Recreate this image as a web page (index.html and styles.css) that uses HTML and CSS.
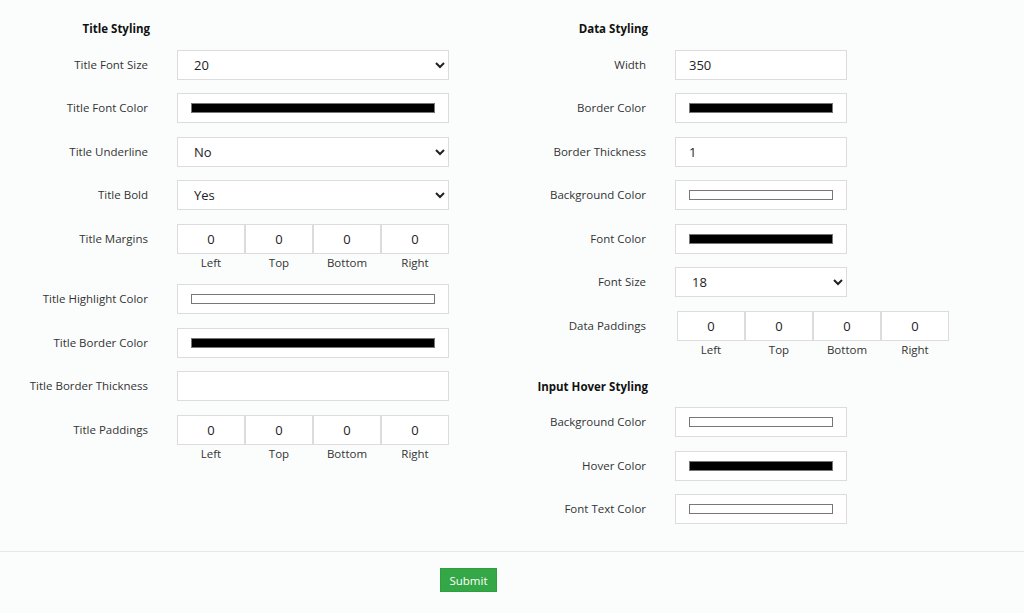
FILE: index.html
```html
<!DOCTYPE html>
<html lang="en">
<head>
  <meta charset="UTF-8">
  <title>Table Styling</title>
  <link rel="stylesheet" href="styles.css">
</head>
<body>
  <form class="settings">
    <div class="columns">

      <section class="panel panel-title-styling">
        <h4 class="panel-heading">Title Styling</h4>

        <label class="field-label">Title Font Size</label>
        <select class="field-control">
          <option>16</option>
          <option selected>20</option>
          <option>24</option>
        </select>

        <label class="field-label">Title Font Color</label>
        <input class="field-control color-input" type="color" value="#000000">

        <label class="field-label">Title Underline</label>
        <select class="field-control">
          <option selected>No</option>
          <option>Yes</option>
        </select>

        <label class="field-label">Title Bold</label>
        <select class="field-control">
          <option>No</option>
          <option selected>Yes</option>
        </select>

        <label class="field-label top">Title Margins</label>
        <div class="box-group">
          <div class="box-cell"><input class="box-input" value="0"><span>Left</span></div>
          <div class="box-cell"><input class="box-input" value="0"><span>Top</span></div>
          <div class="box-cell"><input class="box-input" value="0"><span>Bottom</span></div>
          <div class="box-cell"><input class="box-input" value="0"><span>Right</span></div>
        </div>

        <label class="field-label">Title Highlight Color</label>
        <input class="field-control color-input" type="color" value="#ffffff">

        <label class="field-label">Title Border Color</label>
        <input class="field-control color-input" type="color" value="#000000">

        <label class="field-label">Title Border Thickness</label>
        <input class="field-control" type="text" value="">

        <label class="field-label top">Title Paddings</label>
        <div class="box-group">
          <div class="box-cell"><input class="box-input" value="0"><span>Left</span></div>
          <div class="box-cell"><input class="box-input" value="0"><span>Top</span></div>
          <div class="box-cell"><input class="box-input" value="0"><span>Bottom</span></div>
          <div class="box-cell"><input class="box-input" value="0"><span>Right</span></div>
        </div>
      </section>

      <section class="panel panel-data-styling">
        <h4 class="panel-heading">Data Styling</h4>

        <label class="field-label">Width</label>
        <input class="field-control" type="text" value="350">

        <label class="field-label">Border Color</label>
        <input class="field-control color-input" type="color" value="#000000">

        <label class="field-label">Border Thickness</label>
        <input class="field-control" type="text" value="1">

        <label class="field-label">Background Color</label>
        <input class="field-control color-input" type="color" value="#ffffff">

        <label class="field-label">Font Color</label>
        <input class="field-control color-input" type="color" value="#000000">

        <label class="field-label">Font Size</label>
        <select class="field-control">
          <option>14</option>
          <option>16</option>
          <option selected>18</option>
        </select>

        <label class="field-label top">Data Paddings</label>
        <div class="box-group shifted">
          <div class="box-cell"><input class="box-input" value="0"><span>Left</span></div>
          <div class="box-cell"><input class="box-input" value="0"><span>Top</span></div>
          <div class="box-cell"><input class="box-input" value="0"><span>Bottom</span></div>
          <div class="box-cell"><input class="box-input" value="0"><span>Right</span></div>
        </div>

        <h4 class="panel-heading spaced">Input Hover Styling</h4>

        <label class="field-label">Background Color</label>
        <input class="field-control color-input" type="color" value="#ffffff">

        <label class="field-label">Hover Color</label>
        <input class="field-control color-input" type="color" value="#000000">

        <label class="field-label">Font Text Color</label>
        <input class="field-control color-input" type="color" value="#ffffff">
      </section>

    </div>

    <div class="actions">
      <button type="button" class="submit-btn">Submit</button>
    </div>
  </form>
</body>
</html>
```

FILE: styles.css
```css
body {
  margin: 0;
  background: #fbfdfd;
  font-family: "Open Sans", "Liberation Sans", sans-serif;
  font-size: 11.5px;
  color: #333;
}
.settings {
  padding-top: 19px;
}
.columns {
  display: flex;
  align-items: flex-start;
  gap: 49px;
}
.panel {
  display: grid;
  grid-template-columns: 148px 272px;
  column-gap: 29px;
  row-gap: 13.5px;
  align-items: center;
}
.panel-data-styling {
  grid-template-columns: 148px 172px;
}
.panel-heading {
  grid-column: 1;
  margin: 1px -2px -1px 0;
  text-align: right;
  font-size: 11.5px;
  line-height: 17px;
  font-weight: 700;
  color: #111;
}
.panel-heading.spaced {
  margin-top: 6.5px;
}
.field-label {
  grid-column: 1;
  text-align: right;
  line-height: 30px;
  white-space: nowrap;
}
.field-label.top {
  align-self: start;
}
.field-control {
  grid-column: 2;
  box-sizing: border-box;
  width: 100%;
  height: 30px;
  margin: 0;
  padding: 0 13px;
  border: 1px solid #dcdcdc;
  border-radius: 0;
  background: #fff;
  font-family: inherit;
  font-size: 13px;
  color: #222;
  outline: none;
}
select.field-control {
  padding-left: 12px;
}
.color-input {
  -webkit-appearance: none;
  appearance: none;
  padding: 9px 13px;
  cursor: pointer;
}
.color-input::-webkit-color-swatch-wrapper {
  padding: 0;
}
.color-input::-webkit-color-swatch {
  border: 1px solid #777;
  border-radius: 0;
}
.box-group {
  grid-column: 2;
  display: grid;
  grid-template-columns: repeat(4, 68px);
  width: 272px;
}
.box-group.shifted {
  margin-left: 2px;
}
.box-cell {
  display: flex;
  flex-direction: column;
  align-items: center;
}
.box-input {
  box-sizing: border-box;
  width: 100%;
  height: 30px;
  margin: 0;
  padding: 0;
  border: 1px solid #dcdcdc;
  background: #fff;
  text-align: center;
  font-family: inherit;
  font-size: 13px;
  color: #222;
  outline: none;
}
.box-cell span {
  line-height: 17px;
  font-size: 11.5px;
}
.actions {
  margin-top: 27px;
  border-top: 1px solid #e6e8e8;
  padding: 16px 0 20px 440px;
}
.submit-btn {
  width: 57px;
  height: 24px;
  padding: 0;
  border: 1px solid #2f9e3f;
  border-radius: 0;
  background: #34a846;
  color: #fff;
  font-family: inherit;
  font-size: 11.5px;
  cursor: pointer;
}
```
